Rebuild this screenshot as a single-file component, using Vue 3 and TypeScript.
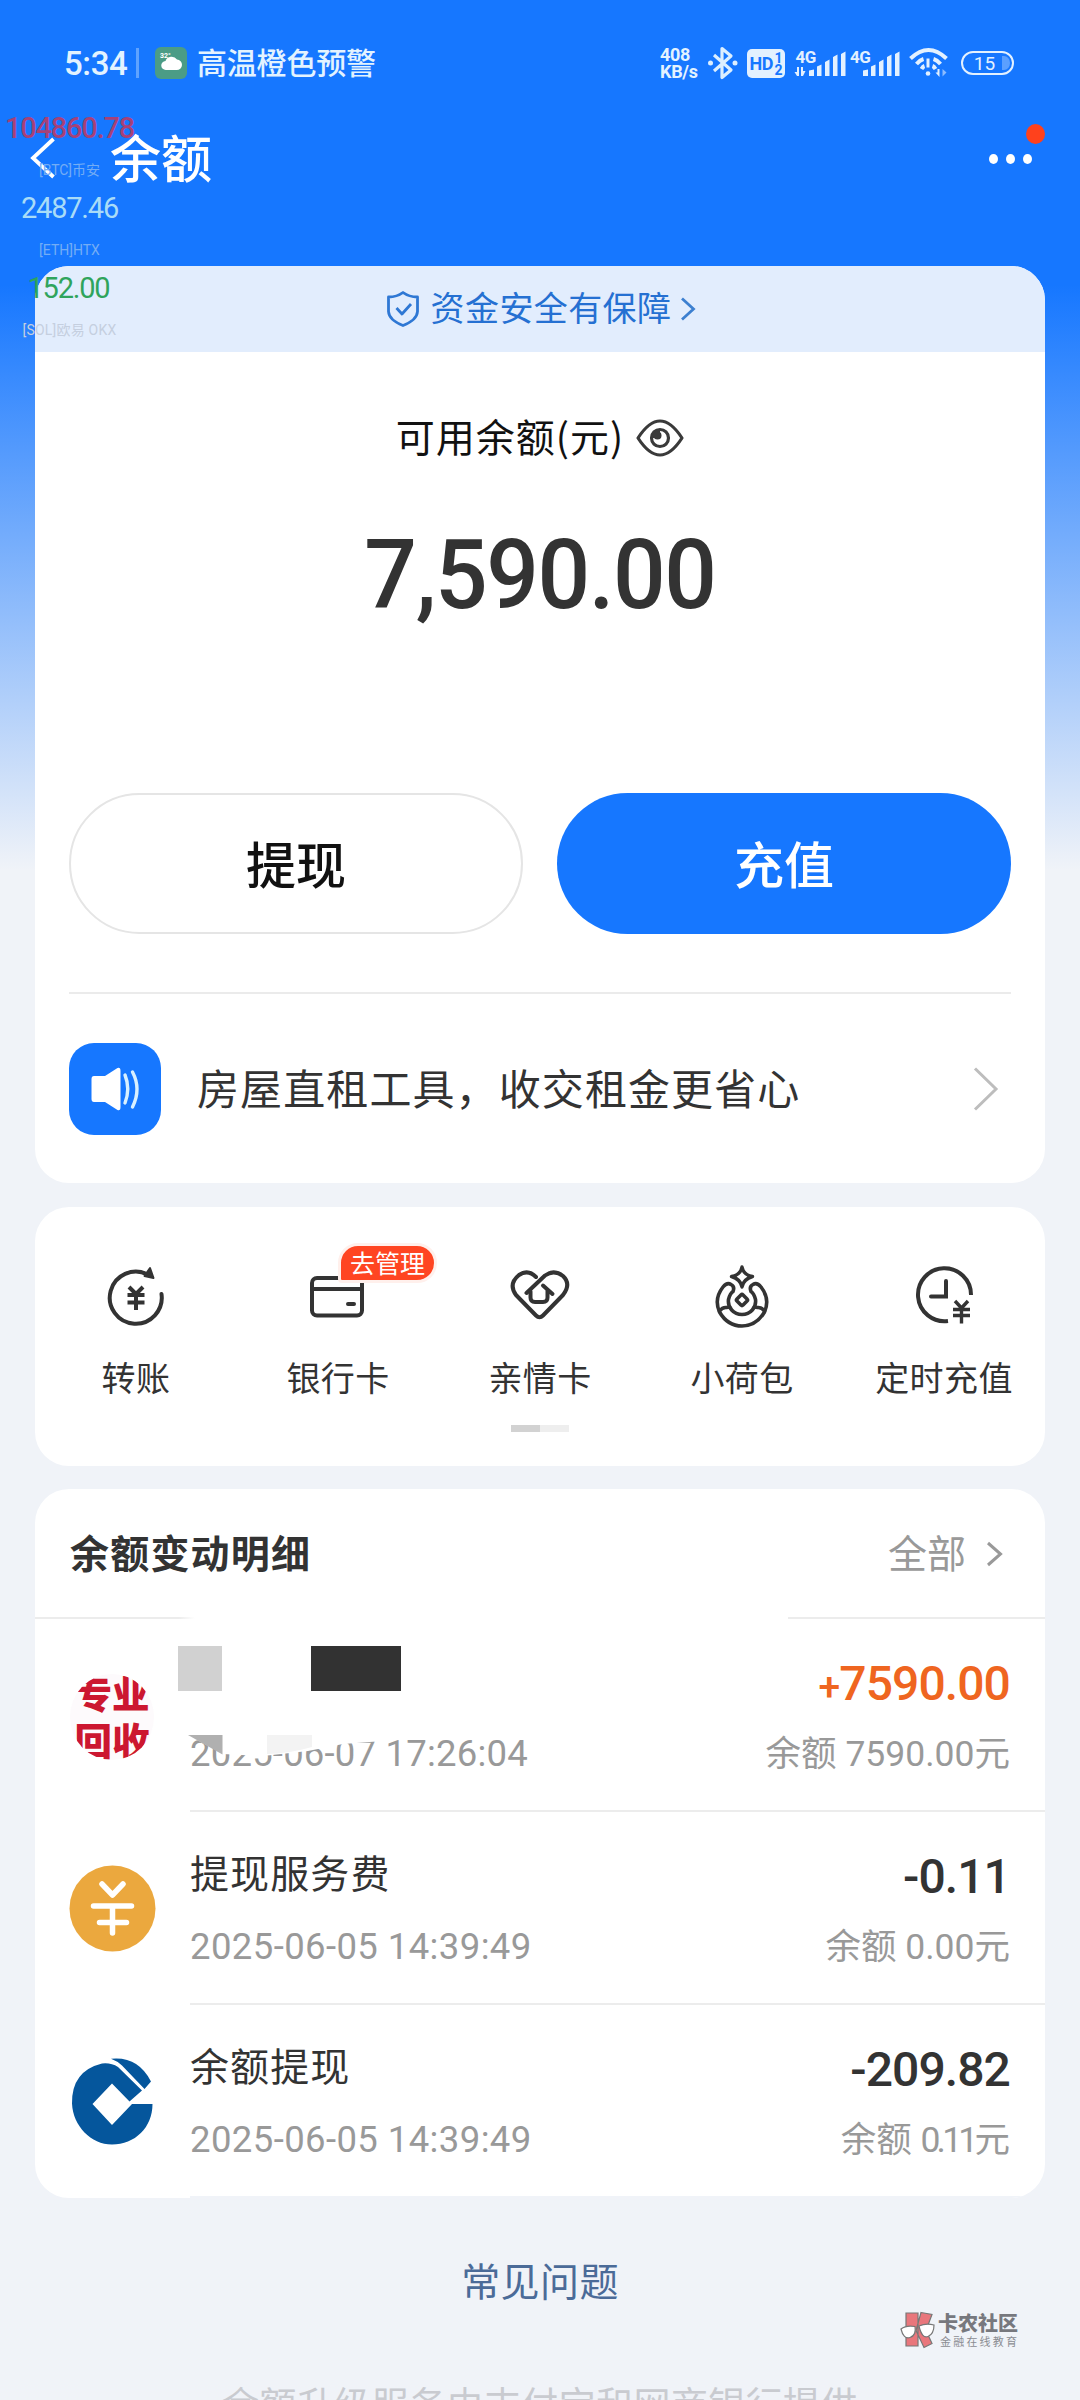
<script setup lang="ts">
interface Ticker { price: string; source: string; tone: string }
interface Shortcut { id: string; label: string; badge?: string }
interface Entry { id: string; title: string; time: string; sign: string; amount: string; balance: string; income?: boolean; slim?: boolean }

const tickers: Ticker[] = [
  { price: '104860.78', source: '[BTC]币安', tone: 'down' },
  { price: '2487.46', source: '[ETH]HTX', tone: 'flat' },
  { price: '152.00', source: '[SOL]欧易 OKX', tone: 'up' },
]

const shortcuts: Shortcut[] = [
  { id: 'transfer', label: '转账' },
  { id: 'card', label: '银行卡', badge: '去管理' },
  { id: 'family', label: '亲情卡' },
  { id: 'pouch', label: '小荷包' },
  { id: 'timer', label: '定时充值' },
]

const entries: Entry[] = [
  { id: 'shop', title: '', time: '2025-06-07 17:26:04', sign: '+', amount: '7590.00', balance: '7590.00', income: true },
  { id: 'fee', title: '提现服务费', time: '2025-06-05 14:39:49', sign: '-', amount: '0.11', balance: '0.00' },
  { id: 'bank', title: '余额提现', time: '2025-06-05 14:39:49', sign: '-', amount: '209.82', balance: '0.11', slim: true },
]
</script>

<template>
  <div class="page">
    <header class="status">
      <div class="status-left">
        <span class="clock">5:34</span>
        <i class="bar"></i>
        <svg class="weather" width="32" height="32" viewBox="0 0 32 32">
          <rect width="32" height="32" rx="6" fill="#4b9c86" />
          <path d="M11 23a4.500 4.500 0 0 1-.5-9 6.500 6.500 0 0 1 11.500-1.500A5 5 0 0 1 21.500 23z" fill="#fff" />
          <text x="5" y="11" class="deg">32°</text>
        </svg>
        <span class="alert">高温橙色预警</span>
      </div>
      <div class="status-right">
        <div class="speed"><span>408</span><span>KB/s</span></div>
        <svg width="30" height="34" viewBox="0 0 30 34" fill="none" stroke="#dcefff" stroke-width="3.200" stroke-linejoin="round">
          <path d="M6 9l17 15-9 7.500V2.500L23 10 6 25" />
          <circle cx="2.500" cy="17" r="2.500" fill="#dcefff" stroke="none" />
          <circle cx="27" cy="17" r="2.500" fill="#dcefff" stroke="none" />
        </svg>
        <svg class="hd" width="38" height="29" viewBox="0 0 38 29">
          <rect width="38" height="29" rx="5" fill="#e3f1ff" />
          <text x="2.500" y="21" class="hd-t">HD</text>
          <text x="27.500" y="13.500" class="hd-n">1</text>
          <text x="27.500" y="26" class="hd-n">2</text>
        </svg>
        <svg class="sig" width="51" height="28" viewBox="0 0 51 28" fill="#e3f1ff">
          <text x="0.500" y="13.500" class="sig-t">4G</text>
          <path d="M2 18h2v9H2l-2.500-4H2zM6 18h2v4h2.500L8 27H6z" />
          <path d="M14 21.500l5-1V27h-5zM22 17.500l4.500-2V27H22zM30 13l4.500-2.500V27H30zM38 8l4.500-2.500V27H38zM46 5l4.500-2.500V27H46z" />
        </svg>
        <svg class="sig2" width="50" height="28" viewBox="0 0 50 28" fill="#e3f1ff">
          <text x="0" y="13.500" class="sig-t">4G</text>
          <path d="M13 21.500l5-1V27h-5zM21 17.500l4.500-2V27H21zM29 13l4.500-2.500V27H29zM37 8l4.500-2.500V27H37zM45 5l4.500-2.500V27H45z" />
        </svg>
        <svg class="wifi" width="39" height="30" viewBox="0 0 39 30" fill="none" stroke="#e3f1ff" stroke-width="4">
          <path d="M1.500 10.500Q19.500-6.500 37.500 10.500" />
          <path d="M7.500 16q3.500-4 7-5M31.500 16q-3.500-4-7-5M12.500 21q1.500-2.500 3-3M26.500 21q-1.500-2.500-3-3" />
          <path d="M19 10.500v9" stroke-width="3" />
          <circle cx="19" cy="25.500" r="2.300" fill="#e3f1ff" stroke="none" />
          <path d="M28.500 21h2v8l-4-4.500h2z" fill="#e3f1ff" stroke="none" />
          <path d="M33.500 21l4 3.500-4 4z" fill="#8cbcff" stroke="none" />
        </svg>
        <svg class="battery" width="53" height="24" viewBox="0 0 53 24">
          <rect x="1" y="1" width="51" height="22" rx="11" fill="none" stroke="#e3f1ff" stroke-width="2" />
          <path d="M41 5h2a6 7 0 0 1 0 14h-2z" fill="#5ba0ff" />
          <text x="23.500" y="18.500" text-anchor="middle" class="bat-t">15</text>
        </svg>
      </div>
    </header>

    <nav class="nav">
      <svg class="back" width="26" height="42" viewBox="0 0 26 42" fill="none" stroke="#fff" stroke-width="3.800"><path d="M23.500 2L3 21l20.500 19" /></svg>
      <h1>余额</h1>
      <div class="more"><i></i><i></i><i></i><b></b></div>
    </nav>

    <aside class="tickers">
      <div v-for="t in tickers" :key="t.source" class="ticker">
        <span class="price" :class="t.tone">{{ t.price }}</span>
        <span class="source" :class="t.tone">{{ t.source }}</span>
      </div>
    </aside>

    <section class="card balance">
      <div class="safe">
        <svg width="32" height="36" viewBox="0 0 32 36" fill="none" stroke="#2f78d4" stroke-width="2.800" stroke-linejoin="round">
          <path d="M16 1.500Q22 6 30.500 6v14.500Q30 29 16 34.500 2 29 1.500 20.500V6Q10 6 16 1.500z" />
          <path d="M9.500 17l5.500 6 9-10" />
        </svg>
        <span>资金安全有保障</span>
        <svg width="16" height="24" viewBox="0 0 16 24" fill="none" stroke="#3d80d0" stroke-width="2.800"><path d="M2 1.500L13.500 12 2 22.500" /></svg>
      </div>
      <div class="avail">
        <span>可用余额(元)</span>
        <svg width="48" height="38" viewBox="0 0 48 38" fill="none" stroke="#3a3a3a" stroke-width="3.200">
          <path d="M2 19Q13 2 24 2t22 17Q35 36 24 36T2 19z" stroke-linejoin="round" />
          <circle cx="24" cy="19" r="8.500" />
          <path d="M24 10.500V19h-8.500a8.500 8.500 0 0 1 8.500-8.500z" fill="#3a3a3a" stroke="none" />
          <circle cx="21.500" cy="16.500" r="4" fill="#3a3a3a" stroke="none" />
        </svg>
      </div>
      <div class="sum">7,590.00</div>
      <div class="actions">
        <button class="btn ghost">提现</button>
        <button class="btn solid">充值</button>
      </div>
      <div class="notice">
        <svg width="92" height="92" viewBox="0 0 92 92">
          <rect width="92" height="92" rx="25" fill="#1677ff" />
          <path d="M25 33h11l12.500-8q3-1 3 3v36q0 4-3 3L36 59H25q-2.500 0-2.500-3V36q0-3 2.500-3z" fill="#fff" />
          <path d="M56 32q5.500 13.500 0 28M63.500 29q9 17 0 35" fill="none" stroke="#d8f0ff" stroke-width="3.400" stroke-linecap="round" />
        </svg>
        <span>房屋直租工具，收交租金更省心</span>
        <svg class="go" width="26" height="44" viewBox="0 0 26 44" fill="none" stroke="#bdbdbd" stroke-width="3"><path d="M2 1.500L23 22 2 42.500" /></svg>
      </div>
    </section>

    <section class="card shortcuts">
      <div class="grid">
        <div v-for="s in shortcuts" :key="s.id" class="cell">
          <svg width="64" height="66" viewBox="0 0 64 66" fill="none" stroke="#333" stroke-width="4" stroke-linecap="round" stroke-linejoin="round">
            <template v-if="s.id === 'transfer'">
              <path d="M43.500 10.500A26 26 0 1 0 57.500 30" />
              <path d="M46 4l3.500 10-9-2z" fill="#333" stroke-width="2" />
              <path d="M25 23l7 7 7-7M32 30v16M23.500 31h17M23.500 38.500h17" stroke-linecap="butt" />
            </template>
            <template v-else-if="s.id === 'card'">
              <rect x="6" y="14" width="50" height="37.500" rx="5" />
              <path d="M6 25h50M42 40h6" />
            </template>
            <template v-else-if="s.id === 'family'">
              <path d="M28 13Q20 5 11 11 0 20 8 31L28 51.500q3.500 3.500 7 0L55 31q8.500-11 0-19Q46 5 37 11.500L18.500 29" />
              <path d="M35 21.500L44.500 30M22.500 27.500v6q0 4.500 4.500 4.500h8q4.500 0 4.500-4.500v-7" />
            </template>
            <template v-else-if="s.id === 'pouch'">
              <path d="M32 3q1.500 8 10.500 9.500Q33.500 15 32 23q-1.500-8-10.500-10.500Q30.500 11 32 3z" stroke-width="3.400" />
              <path d="M21 20.500q4 2 2 7-3 2-4.500 8c-1 8 5 15 13.500 15s14.500-7 13.500-15q-1.500-6-4.500-8-2-5 2-7c3-2 6 0 8 2.500 5.500 7 7.500 16 3.500 25C49 57.500 41 62 32 62S15 57.500 9.500 48c-4-9-2-18 3.500-25 2-2.500 5-4.500 8-2.500z" stroke-width="3.600" />
              <path d="M9.500 47q3-4 7-3.500l3-.5M54.500 47q-3-4-7-3.500l-3-.5" stroke-width="3.600" />
              <rect x="27.700" y="31.700" width="8.600" height="8.600" rx="1.500" transform="rotate(45 32 36)" stroke-width="3.600" />
            </template>
            <template v-else>
              <path d="M59 31A26.500 26.500 0 1 0 36 57" stroke-linecap="butt" />
              <path d="M34 17v15.500H19" stroke-linejoin="miter" />
              <path d="M43 37l6.500 7 6.500-7M49.500 44v15.500M41 45.500h17M41 51.500h17" stroke-width="3.400" stroke-linecap="butt" />
            </template>
          </svg>
          <span class="label">{{ s.label }}</span>
          <em v-if="s.badge" class="badge">{{ s.badge }}</em>
        </div>
      </div>
      <div class="pager"><i></i></div>
    </section>

    <section class="card details">
      <div class="head">
        <h2>余额变动明细</h2>
        <span class="all">全部</span>
        <svg width="17" height="26" viewBox="0 0 17 26" fill="none" stroke="#999" stroke-width="3"><path d="M2 2l12.500 11L2 24" /></svg>
      </div>
      <div class="rule"><i></i><i></i></div>
      <div v-for="e in entries" :key="e.id" class="row">
        <div class="logo">
          <div v-if="e.id === 'shop'" class="shop"><span>专业</span><span>回收</span></div>
          <svg v-else-if="e.id === 'fee'" width="87" height="87" viewBox="0 0 87 87">
            <circle cx="43.500" cy="43.500" r="43" fill="#eba83e" />
            <path d="M33 19l10.500 11L54 19M24.500 41h38M30.500 57.500h27M43.500 41v27" fill="none" stroke="#fff" stroke-width="5.500" stroke-linecap="round" stroke-linejoin="round" />
          </svg>
          <svg v-else width="87" height="87" viewBox="0 0 87 87">
            <path fill="#05569c" fill-rule="evenodd" d="M33 5.500Q2.500 13 3 45.500C4 68 22 86.500 43 86.500c23 0 40.500-17 40.500-40.500H63L43 67 23.500 46 43 25.500l17.500 18L73 32.500 49 9Q42 4.500 33 5.500z" />
            <path fill="#05569c" d="M42 .800Q69-2 82 23.500L75.500 31 53 7.500Q48 3 42 .800z" />
          </svg>
        </div>
        <div class="body">
          <div class="info">
            <div class="title">{{ e.title }}</div>
            <div class="time" :class="{ first: e.income }">{{ e.time }}</div>
          </div>
          <div class="nums">
            <div class="amount" :class="{ income: e.income }"><span class="sign">{{ e.sign }}</span>{{ e.amount }}</div>
            <div class="left">余额 <span :class="{ slim: e.slim }">{{ e.balance }}</span>元</div>
          </div>
          <svg v-if="e.id === 'shop'" class="mask" width="260" height="125" viewBox="0 0 260 125">
            <path d="M10 89L45 108 85 110 130 105 165 98 205 95V80H10z" fill="#fff" />
            <path d="M0 0h44v45H0z" fill="#d1d1d1" />
            <path d="M133 0h90v45h-90z" fill="#323232" />
            <path d="M10 89h34.500v19.500z" fill="#b0b0b0" />
            <path d="M89 89h45v12q-25 7-45 7z" fill="#f3f3f3" />
          </svg>
        </div>
      </div>
    </section>

    <footer class="foot">
      <a class="faq">常见问题</a>
      <p class="legal">余额升级服务由支付宝和网商银行提供</p>
    </footer>

    <div class="stamp">
      <svg width="36" height="38" viewBox="0 0 36 38" stroke="#777" stroke-width="1.200">
        <path d="M6 2h12v33H6zM21 1.500l11 2-6 16 6 13-8 4-8-17z" fill="#e9767c" />
        <path d="M1 18q5-4 14-2.500 1.500 9-5 11T1 18zM19 15q7-3 15-1 0 9-6 11.500T19 15z" fill="#fff" />
      </svg>
      <div class="stamp-t"><strong>卡农社区</strong><span>金融在线教育</span></div>
    </div>
  </div>
</template>

<style>
body { margin: 0; }
</style>

<style scoped>
.page {
  position: relative;
  width: 1080px;
  height: 2400px;
  overflow: hidden;
  background: linear-gradient(180deg, #1677ff 0, #1677ff 285px, #f0f3f8 870px);
  font-family: 'Noto Sans CJK SC', sans-serif;
  color: #333;
}
svg { display: block; flex: none; overflow: visible; }
h1, h2, p { margin: 0; }

.status { height: 126px; display: flex; justify-content: space-between; box-sizing: border-box; padding: 0 66px 0 64px; }
.status-left, .status-right { display: flex; align-items: center; height: 126px; color: #e3f3ff; }
.clock { width: 64px; font: 500 33px/40px Roboto, sans-serif; letter-spacing: -.4px; white-space: nowrap; padding-top: 2px; }
.bar { width: 3px; height: 30px; background: #5fa3ff; margin: 0 16px 0 8px; }
.weather { margin-right: 10px; }
.deg { font: 700 7px Roboto, sans-serif; fill: #fff; }
.alert { font-size: 30px; line-height: 40px; font-weight: 500; padding-bottom: 4px; letter-spacing: -.2px; }
.speed { display: flex; flex-direction: column; width: 48px; font: 700 18px/17px Roboto, sans-serif; letter-spacing: -.3px; }
.hd { margin-left: 9px; }
.hd-t { font: 700 18px Roboto, sans-serif; fill: #1677ff; letter-spacing: -.5px; }
.hd-n { font: 700 14px Roboto, sans-serif; fill: #1677ff; }
.sig { margin-left: 10px; }
.sig2 { margin-left: 4px; }
.sig-t { font: 700 17px Roboto, sans-serif; letter-spacing: -.6px; }
.wifi { margin-left: 9px; }
.battery { margin-left: 13px; }
.bat-t { font: 400 19px Roboto, sans-serif; fill: #e3f1ff; }

.nav { height: 140px; display: flex; align-items: flex-start; box-sizing: border-box; padding: 0 48px 0 30px; color: #fff; }
.back { margin-top: 11px; }
.nav h1 { margin: -3px 0 0 54px; font-size: 51px; line-height: 66px; font-weight: 500; }
.more { position: relative; margin: 28px 0 0 auto; display: flex; gap: 8px; }
.more i { width: 9px; height: 10px; border-radius: 50%; background: #fff; }
.more b { position: absolute; right: -13px; top: -30px; width: 19px; height: 20px; border-radius: 50%; background: #ff411c; }

.tickers { position: absolute; z-index: 3; left: 0; top: 108px; width: 139px; }
.ticker { display: flex; flex-direction: column; align-items: center; height: 80px; white-space: nowrap; }
.price { font: 400 29px/40px Roboto, 'Noto Sans CJK SC', sans-serif; }
.price.down { color: rgba(214, 48, 76, .75); font-weight: 500; letter-spacing: -1.200px; }
.price.flat { color: #a9dcf7; letter-spacing: -1.200px; }
.price.up { color: #2fa45c; letter-spacing: -1.200px; padding-right: 2px; }
.source { margin-top: 12px; font: 400 14px/20px Roboto, 'Noto Sans CJK SC', sans-serif; color: #74adf5; }
.source.up { color: #c5cfdf; letter-spacing: .2px; }

.card { margin: 0 35px; background: #fff; border-radius: 34px; overflow: hidden; }
.balance { height: 917px; box-sizing: border-box; }
.safe { height: 86px; background: #e2edfd; display: flex; align-items: center; justify-content: center; color: #2570d2; font-size: 34px; padding-left: 3px; }
.safe span { margin: 0 9px 0 12px; line-height: 50px; letter-spacing: .4px; padding-bottom: 4px; }
.avail { display: flex; align-items: center; justify-content: center; margin-top: 56px; height: 60px; font-size: 39px; line-height: 60px; color: #111; }
.avail span { letter-spacing: 1px; margin-right: 12px; padding-bottom: 6px; }
.sum { margin-top: 57px; height: 100px; text-align: center; font: 500 97px/100px Roboto, sans-serif; color: #333; letter-spacing: -1.500px; transform: scaleX(.956); }
.actions { margin: 168px 34px 0; display: flex; justify-content: space-between; }
.btn { width: 454px; height: 141px; box-sizing: border-box; border-radius: 71px; font: 500 50px/100px 'Noto Sans CJK SC', sans-serif; padding: 0 0 4px; border: 0; }
.ghost { background: #fff; border: 2px solid #e5e5e5; color: #111; }
.solid { background: #1677ff; color: #fff; }
.notice { margin: 58px 34px 0; border-top: 2px solid #ebebeb; height: 190px; display: flex; align-items: center; }
.notice span { margin-left: 36px; font-size: 42px; line-height: 60px; letter-spacing: 1.100px; white-space: nowrap; padding-bottom: 5px; }
.go { margin: 0 12px 0 auto; }

.shortcuts { position: relative; margin-top: 24px; height: 259px; }
.grid { display: flex; height: 218px; }
.cell { position: relative; width: 202px; display: flex; flex-direction: column; align-items: center; padding-top: 57px; }
.label { margin-top: 21px; font-size: 34px; line-height: 52px; letter-spacing: .4px; white-space: nowrap; }
.badge { position: absolute; left: 101px; top: 36px; height: 34px; padding: 0 9px; border: 3px solid #fff0ec; background: #ff4522; border-radius: 20px 20px 20px 4px; color: #fff; font: 400 25px/32px 'Noto Sans CJK SC', sans-serif; white-space: nowrap; }
.pager { width: 58px; height: 7px; margin: 0 auto; background: #eee; }
.pager i { display: block; width: 29px; height: 7px; background: #d2d2d2; }

.details { margin-top: 23px; height: 709px; }
.head { height: 127px; display: flex; align-items: center; padding: 1px 42px 0 35px; }
.head h2 { flex: 1; font-size: 39px; line-height: 60px; font-weight: 700; letter-spacing: 1.200px; padding-bottom: 6px; }
.all { font-size: 39px; line-height: 60px; color: #999; margin-right: 20px; padding-bottom: 6px; }
.rule { display: flex; justify-content: space-between; height: 2px; }
.rule i { width: 160px; background: linear-gradient(90deg, #ececec 90%, #fff); }
.rule i + i { width: 257px; background: #ececec; }
.row { height: 193px; display: flex; }
.logo { width: 155px; display: flex; box-sizing: border-box; padding: 53px 0 0 34px; }
.shop { width: 84px; height: 86px; border-radius: 50%; background: #fdfafc; overflow: hidden; display: flex; flex-direction: column; align-items: center; font-size: 37.500px; line-height: 47px; font-weight: 900; color: #cc1730; margin: 2px 0 0 1px; }
.shop span { position: relative; top: -6px; }
.body { position: relative; flex: 1; display: flex; justify-content: space-between; box-sizing: border-box; border-bottom: 2px solid #ececec; padding: 0 35px 0 0; }
.row:last-child .body { border-color: #f0f3f8; }
.title { height: 60px; margin-top: 29px; font-size: 39px; line-height: 60px; letter-spacing: 1.100px; }
.time { margin-top: 16px; font: 400 36.500px/60px Roboto, sans-serif; letter-spacing: .4px; color: #999; }
.time.first { letter-spacing: .2px; }
.nums { text-align: right; }
.amount { height: 60px; margin-top: 35px; font: 500 48px/60px Roboto, sans-serif; letter-spacing: -.9px; }
.income { color: #ef6520; }
.income .sign { font-size: 39px; line-height: 0; }
.left { margin-top: 10px; font: 400 35.500px/60px Roboto, 'Noto Sans CJK SC', sans-serif; color: #999; }
.slim { letter-spacing: -3.800px; }
.mask { position: absolute; left: -12px; top: 27px; }

.foot { text-align: center; }
.faq { display: block; margin-top: 51px; font-size: 39px; line-height: 60px; color: #4b6b98; letter-spacing: .4px; }
.legal { margin-top: 64px; font-size: 37px; line-height: 60px; color: #c9cbd0; letter-spacing: .4px; }

.stamp { position: absolute; left: 900px; top: 2311px; display: flex; gap: 2px; }
.stamp-t { display: flex; flex-direction: column; color: #77787e; white-space: nowrap; }
.stamp-t strong { font-size: 20px; line-height: 24px; font-weight: 900; }
.stamp-t span { margin: 0 0 0 2px; font-size: 11px; line-height: 12px; letter-spacing: 2.200px; color: #8b8d93; }
</style>
